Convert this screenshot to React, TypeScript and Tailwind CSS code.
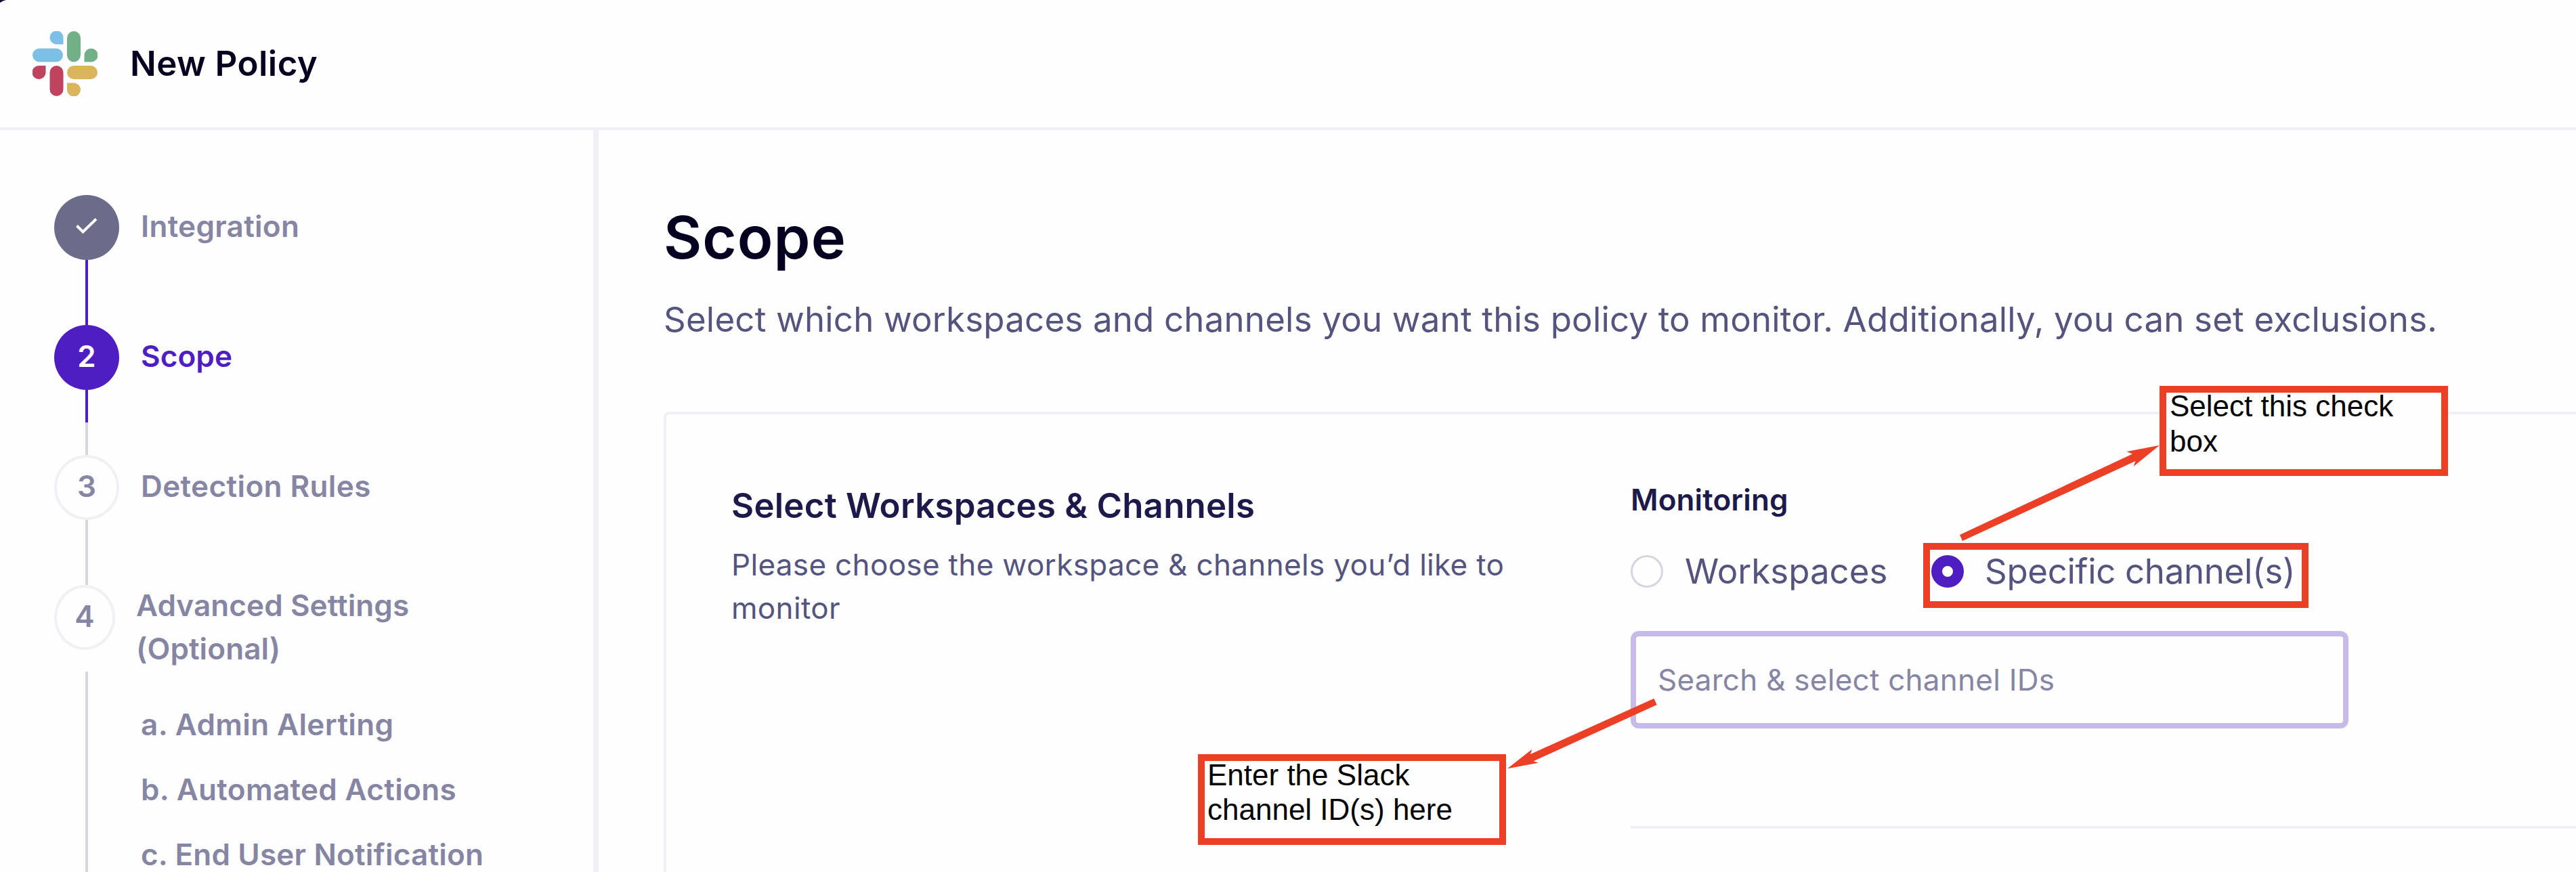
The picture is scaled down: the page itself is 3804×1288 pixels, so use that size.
import type { ReactNode } from 'react';

function SlackLogo() {
  return (
    <svg viewBox="0 0 96 96" className="size-24 shrink-0">
      <g fill="#7cbfe7">
        <path d="M45.5 19.5H35.5A10 10 0 1 1 45.5 9.7Z" />
        <rect x="0" y="25.5" width="45" height="20" rx="10" />
      </g>
      <g fill="#72b087">
        <rect x="51" y="0" width="20" height="45.5" rx="10" />
        <path d="M76.5 45.5V35.5A10 10 0 1 1 86.3 45.5Z" />
      </g>
      <g fill="#be435c">
        <path d="M19.5 51V61A10 10 0 1 1 9.7 51Z" />
        <rect x="25.5" y="51" width="20" height="45" rx="10" />
      </g>
      <g fill="#dab55e">
        <rect x="51" y="51" width="45" height="20" rx="10" />
        <path d="M51 76.5H61A10 10 0 1 1 51 86.3Z" />
      </g>
    </svg>
  );
}

function Step({ marker, label, circle, text }: { marker: ReactNode; label: string; circle: string; text: string }) {
  return (
    <div className="flex h-24 items-center">
      <div className={`flex size-24 shrink-0 items-center justify-center rounded-full ${circle}`}>{marker}</div>
      <div className={`ml-8 pb-1 leading-[64px] ${text}`}>{label}</div>
    </div>
  );
}

function SubItem({ children, className }: { children: ReactNode; className: string }) {
  return <div className={`flex h-24 shrink-0 items-center ${className}`}>{children}</div>;
}

function Sidebar() {
  return (
    <aside className="flex w-[884px] shrink-0 flex-col border-r-8 border-[#f0f0f5] pt-24 pl-20 text-[44px] font-semibold whitespace-nowrap text-[#8685a3]">
      <Step
        circle="bg-[#6b6b8a]"
        text="tracking-[0.3px]"
        label="Integration"
        marker={
          <svg viewBox="0 0 32 24" className="mb-1 h-6 w-8" fill="none" stroke="white" strokeWidth="4">
            <path d="M1.5 11.5L10.5 20.5L30 1.5" />
          </svg>
        }
      />
      <div className="ml-[46px] h-24 w-1 bg-[#4f1ec3]" />
      <Step
        circle="bg-[#4f1ec3] text-white"
        text="text-[#4f1ec3] tracking-[0.1px]"
        label="Scope"
        marker={<span className="pb-1">2</span>}
      />
      <div className="ml-[46px] h-12 w-1 bg-[#4f1ec3]" />
      <div className="ml-[46px] h-12 w-1 bg-[#d6d5e0]" />
      <Step
        circle="border-4 border-[#f0f0f5]"
        text="tracking-[0.4px]"
        label="Detection Rules"
        marker={<span className="pb-1">3</span>}
      />
      <div className="ml-[46px] h-24 w-1 bg-[#d6d5e0]" />
      <div className="flex h-32 items-start">
        <div className="flex h-24 w-[90px] shrink-0 items-center justify-center rounded-[50%] border-4 border-[#f0f0f5]">
          <span className="pb-1">4</span>
        </div>
        <div className="-mt-0.5 ml-[31px] leading-[64px] tracking-[0.1px]">
          Advanced Settings
          <br />
          (Optional)
        </div>
      </div>
      <div className="ml-[46px] flex min-h-0 flex-1 flex-col overflow-hidden border-l-4 border-[#d6d5e0] pt-[30px] pl-[78px]">
        <SubItem className="tracking-[0.4px]">a. Admin Alerting</SubItem>
        <SubItem className="tracking-[0.35px]">b. Automated Actions</SubItem>
        <SubItem className="tracking-[0.2px]">c. End User Notification</SubItem>
      </div>
    </aside>
  );
}

function ScopeCard() {
  return (
    <section className="mt-[104px] flex min-h-0 flex-1 overflow-hidden rounded-tl-lg border-t-4 border-l-4 border-[#f0f0f5] pl-24 whitespace-nowrap">
      <div className="w-[1328px] shrink-0 pt-[103px]">
        <h2 className="text-[51px] leading-[64px] font-semibold tracking-[0.22px] text-[#1d1a4b]">
          Select Workspaces &amp; Channels
        </h2>
        <p className="mt-[23px] text-[44px] leading-[64px] tracking-[0.33px] text-[#55547e]">
          Please choose the workspace &amp; channels you’d like to
          <br />
          monitor
        </p>
      </div>
      <div className="min-w-0 flex-1 pt-[94px]">
        <h3 className="text-[44px] leading-[64px] font-semibold tracking-[0.1px] text-[#1d1a4b]">Monitoring</h3>
        <div className="mt-8 flex h-24 items-center pb-3 text-[51px] leading-[64px] text-[#55547e]">
          <div className="flex w-[444px] items-center gap-8">
            <span className="size-12 shrink-0 rounded-full border-[3px] border-[#d6d5e0]" />
            Workspaces
          </div>
          <div className="flex items-center gap-[31px]">
            <span className="size-12 shrink-0 rounded-full border-16 border-[#4f1ec3]" />
            <span className="tracking-[-0.32px]">Specific channel(s)</span>
          </div>
        </div>
        <div className="mt-[34px] flex h-36 w-[1060px] items-center rounded-xl border-8 border-[#c8bae8] pl-8 text-[44px] leading-[64px] tracking-[0.25px] text-[#8685a3]">
          Search &amp; select channel IDs
        </div>
        <div className="mt-36 h-1 bg-[#f0f0f5]" />
      </div>
    </section>
  );
}

function Annotations() {
  return (
    <div className="pointer-events-none absolute inset-0 overflow-hidden whitespace-nowrap font-['Liberation_Sans',Arial,sans-serif] text-[44px] text-black">
      <div className="absolute top-[802px] left-[2840px] h-24 w-[569px] border-10 border-[#eb4025]" />
      <div className="absolute top-[570px] left-[3189px] h-[133px] w-[426px] border-10 border-[#eb4025] bg-[#fefefe] pl-[5px]">
        <p className="-mt-1.5 leading-[52px]">
          Select this check
          <br />
          box
        </p>
      </div>
      <div className="absolute top-[1114px] left-[1769px] h-[134px] w-[455px] border-10 border-[#eb4025] bg-[#fefefe] pl-1">
        <p className="-mt-[5px] leading-[51px]">
          Enter the Slack
          <br />
          channel ID(s) here
        </p>
      </div>
      <svg viewBox="0 0 3804 1288" className="absolute inset-0 size-full" fill="#eb4025">
        <path d="M2894 790L3149 670.5L3140.5 667L3189 657.7L3150.5 689L3153.5 681L2898 799Z" />
        <path d="M2442.4 1031.7L2260 1114L2262.3 1106.7L2226 1135.3L2271.8 1126.7L2264.5 1124.3L2446.7 1041Z" />
      </svg>
    </div>
  );
}

export default function App() {
  return (
    <div className="relative flex h-[1288px] w-[3804px] flex-col overflow-hidden bg-[#fefefe] font-['Inter','Noto_Sans',sans-serif]">
      <header className="flex h-48 shrink-0 items-center border-b-4 border-[#f0f0f5] pl-12">
        <SlackLogo />
        <h1 className="ml-12 text-[51px] leading-[64px] font-semibold tracking-[0.45px] text-[#050020]">New Policy</h1>
      </header>
      <div className="flex min-h-0 flex-1">
        <Sidebar />
        <main className="flex min-w-0 flex-1 flex-col pt-[107px] pl-24">
          <h1 className="text-[86.5px] leading-[104px] font-semibold tracking-[1.1px] text-[#050020]">Scope</h1>
          <p className="mt-[37px] text-[51px] leading-[64px] tracking-[0.19px] whitespace-nowrap text-[#55547e]">
            Select which workspaces and channels you want this policy to monitor. Additionally, you can set exclusions.
          </p>
          <ScopeCard />
        </main>
      </div>
      <Annotations />
      {/* dark window edge showing behind the rounded top-left corner */}
      <svg viewBox="0 0 12 6" className="absolute top-0 left-0 h-1.5 w-3" fill="#100a35">
        <path d="M0 0H9Q4 0.8 0 4Z" />
      </svg>
    </div>
  );
}
